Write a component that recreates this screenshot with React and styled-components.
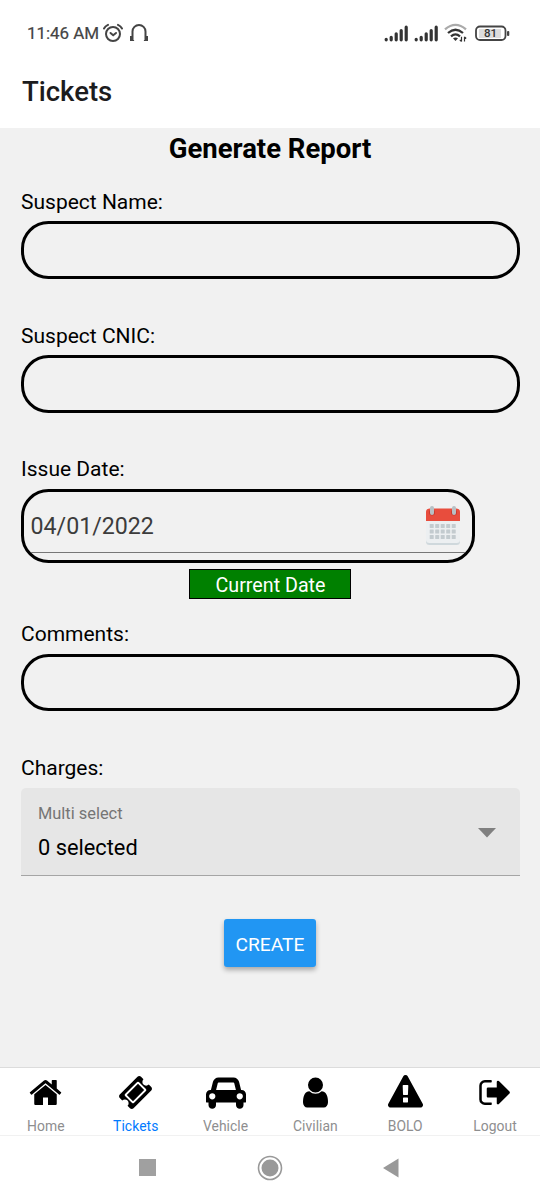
import React from "react";
import styled, { createGlobalStyle } from "styled-components";

const Global = createGlobalStyle`
  * { box-sizing: border-box; }
  body { margin: 0; background: #fff; font-family: Roboto, "Liberation Sans", sans-serif; }
  button, input { font-family: inherit; }
`;

const Screen = styled.div`
  width: 540px;
  height: 1200px;
  display: flex;
  flex-direction: column;
  background: #fff;
  overflow: hidden;
`;

const StatusBar = styled.div`
  height: 66px;
  padding: 0 30px 0 27px;
  display: flex;
  align-items: center;
  justify-content: space-between;
`;

const StatusGroup = styled.div`
  display: flex;
  align-items: center;
  gap: ${(p) => p.$gap}px;
`;

const Clock = styled.span`
  font-size: 17px;
  line-height: 20px;
  letter-spacing: -0.05px;
  color: #444;
  white-space: nowrap;
  -webkit-text-stroke: 0.2px #444;
`;

const Header = styled.header`
  height: 62px;
  padding: 9px 22px 0;
  font-size: 27.5px;
  line-height: 34px;
  font-weight: 500;
  color: #1c1c1e;
`;

const Form = styled.main`
  height: 939px;
  padding: 4px 21px 0;
  display: flex;
  flex-direction: column;
  background: #f1f1f1;
`;

const Heading = styled.h1`
  margin: 0 0 20px;
  font-size: 27.5px;
  line-height: 34px;
  font-weight: 700;
  text-align: center;
  color: #000;
`;

const Field = styled.div`
  height: ${(p) => p.$height}px;
  display: flex;
  flex-direction: column;
`;

const Label = styled.label`
  height: ${(p) => p.$height || 36}px;
  font-size: 21px;
  line-height: 32px;
  color: #000;
`;

const Input = styled.input`
  width: 499px;
  height: ${(p) => p.$height}px;
  padding: 0 12px;
  border: 3px solid #000;
  border-radius: 27.5px;
  background: transparent;
  font-size: 20px;
  outline: none;
`;

const DateBox = styled.div`
  width: 454px;
  height: 74px;
  flex: none;
  border: 3px solid #000;
  border-radius: 27.5px;
  overflow: hidden;
`;

const DateRow = styled.div`
  height: 61px;
  padding: 8px 12px 0 6.5px;
  display: flex;
  align-items: center;
  justify-content: space-between;
  border-bottom: 1px solid #777;
  font-size: 23.2px;
  color: #3c3c3c;
`;

const CurrentDate = styled.button`
  align-self: center;
  width: 162px;
  height: 30px;
  margin-top: 6px;
  padding: 3px 0 0 1px;
  border: 1px solid #000;
  background: #008000;
  color: #fff;
  font-size: 19.7px;
  line-height: 26px;
`;

const Select = styled.div`
  width: 499px;
  height: 88px;
  flex: none;
  padding: 2px 24px 0 17px;
  display: flex;
  align-items: center;
  justify-content: space-between;
  border-radius: 5px 5px 0 0;
  border-bottom: 1px solid #a5a5a5;
  background: #e6e6e6;
`;

const SelectText = styled.div`
  display: flex;
  flex-direction: column;
  gap: 8px;
`;

const SelectCaption = styled.span`
  font-size: 16.4px;
  line-height: 22px;
  color: #757575;
`;

const SelectValue = styled.span`
  font-size: 21.8px;
  line-height: 30px;
  color: #000;
`;

const CreateButton = styled.button`
  align-self: center;
  width: 92px;
  height: 48px;
  margin-top: 43px;
  padding: 2px 0 0;
  border: 0;
  border-radius: 3px;
  background: #2196f3;
  color: #fff;
  font-size: 19.2px;
  box-shadow: 0 3px 5px rgba(0, 0, 0, 0.3);
`;

const TabBar = styled.nav`
  height: 69px;
  padding-left: 1px;
  display: flex;
  border-top: 1px solid #dcdcdc;
  border-bottom: 1px solid #f1f1f1;
`;

const Tab = styled.a`
  flex: 1;
  padding-top: 7px;
  display: flex;
  flex-direction: column;
  align-items: center;
  gap: 6px;
  font-size: 13.9px;
  line-height: 20px;
  letter-spacing: 0.05px;
  color: ${(p) => (p.$active ? "#007aff" : "#8e8e8f")};
`;

const TabIcon = styled.svg`
  flex: none;
  height: 35px;
  width: ${(p) => p.$width}px;
  fill: #000;
`;

const SystemNav = styled.div`
  height: 64px;
  padding: 0 0 1px 139px;
  display: flex;
  align-items: center;
  gap: 100px;
`;

const tabs = [
  { name: "Home", d: "M1472 992v480q0 26-19 45t-45 19h-384v-384h-256v384h-384q-26 0-45-19t-19-45v-480q0-1 .5-3t.5-3l575-474 575 474q1 2 1 6zm223-69l-62 74q-8 9-21 11h-3q-13 0-21-7l-692-577-692 577q-12 8-24 7-13-2-21-11l-62-74q-8-10-7-23.5t11-21.5l719-599q32-26 76-26t76 26l244 204v-195q0-14 9-23t23-9h192q14 0 23 9t9 23v408l219 182q10 8 11 21.5t-7 23.5z" },
  { name: "Tickets", active: true, d: "M1024 452l316 316-572 572-316-316zm-211 979l618-618q19-19 19-45t-19-45l-362-362q-18-18-45-18t-45 18l-618 618q-19 19-19 45t19 45l362 362q18 18 45 18t45-18zm889-637l-907 908q-37 37-90.5 37t-90.5-37l-126-126q56-56 56-136t-56-136-136-56-136 56l-125-126q-37-37-37-90.5t37-90.5l907-906q37-37 90.5-37t90.5 37l125 125q-56 56-56 136t56 136 136 56 136-56l126 125q37 37 37 90.5t-37 90.5z" },
  { name: "Vehicle", units: 2048, d: "M480 1088q0-66-47-113t-113-47-113 47-47 113 47 113 113 47 113-47 47-113zm36-320h1016l-89-357q-2-8-14-17.500t-21-9.500h-768q-9 0-21 9.500t-14 17.500zm1372 320q0-66-47-113t-113-47-113 47-47 113 47 113 113 47 113-47 47-113zm160-96v384q0 14-9 23t-23 9h-96v128q0 80-56 136t-136 56-136-56-56-136v-128h-1024v128q0 80-56 136t-136 56-136-56-56-136v-128h-96q-14 0-23-9t-9-23v-384q0-93 65.500-158.500t158.500-65.500h28l105-419q23-94 104-157.500t179-63.500h768q98 0 179 63.500t104 157.500l105 419h28q93 0 158.500 65.500t65.500 158.500z" },
  { name: "Civilian", d: "M1536 1399q0 109-62.5 187t-150.5 78h-854q-88 0-150.5-78t-62.5-187q0-85 8.5-160.5t31.500-152 58.500-131 94-89 134.500-34.500q131 128 313 128t313-128q76 0 134.500 34.500t94 89 58.500 131 31.500 152 8.500 160.500zm-256-887q0 159-112.500 271.500t-271.500 112.500-271.500-112.500-112.500-271.500 112.500-271.500 271.500-112.500 271.500 112.500 112.500 271.500z" },
  { name: "BOLO", d: "M1024 1375v-190q0-14-9.500-23.500t-22.500-9.500h-192q-13 0-22.500 9.500t-9.500 23.500v190q0 14 9.500 23.500t22.500 9.500h192q13 0 22.500-9.500t9.500-23.500zm-2-374l18-459q0-12-10-19-13-11-24-11h-220q-11 0-24 11-10 7-10 21l17 457q0 10 10 16.500t24 6.500h185q14 0 23.500-6.500t10.500-16.500zm-14-934l768 1408q35 63-2 126-17 29-46.500 46t-63.500 17h-1536q-34 0-63.500-17t-46.500-46q-37-63-2-126l768-1408q17-31 47-49t65-18 65 18 47 49z" },
  { name: "Logout", d: "M704 1440q0 4 1 20t.5 26.500-3 23.500-10 19.500-20.500 6.500h-320q-119 0-203.500-84.500t-84.500-203.500v-704q0-119 84.500-203.500t203.500-84.500h320q13 0 22.500 9.500t9.500 22.500q0 4 1 20t.5 26.500-3 23.500-10 19.500-20.500 6.500h-320q-66 0-113 47t-47 113v704q0 66 47 113t113 47h312l11.500 1 11.500 3 8 5.500 7 9 2 13.500zm928-544q0 26-19 45l-544 544q-19 19-45 19t-45-19-19-45v-288h-448q-26 0-45-19t-19-45v-384q0-26 19-45t45-19h448v-288q0-26 19-45t45-19 45 19l544 544q19 19 19 45z" },
];

const AlarmIcon = () => (
  <svg width="20" height="20" viewBox="0 0 20 20" fill="none" stroke="#444" strokeWidth="2" strokeLinecap="round">
    <circle cx="10" cy="11" r="7" />
    <path d="M1 5.500Q2.300 3 5 1.800M19 5.500Q17.700 3 15 1.800" />
    <path d="M7.500 10l2.700 2.300L13 10" />
  </svg>
);

const HeadphonesIcon = () => (
  <svg width="20" height="20" viewBox="0 0 20 20" fill="none" stroke="#444">
    <path d="M3.500 17V8.500a6.500 6.500 0 0 1 13 0V17" strokeWidth="2" />
    <path d="M2.500 13v5M17.500 13v5" strokeWidth="3" />
    <path d="M4.500 17v1M15.500 17v1" strokeWidth="1.200" />
  </svg>
);

const SignalIcon = () => (
  <svg width="25" height="17" viewBox="0 0 25 17" stroke="#333" strokeWidth="3.200" strokeLinecap="round">
    <path d="M2.200 14.300v.5M7.200 12.300v2.500M12.200 8.800v6M17.200 5.600v9.200M22.200 2.200v12.600" />
  </svg>
);

const WifiIcon = () => (
  <svg width="24" height="20" viewBox="0 0 24 20" fill="none" strokeWidth="2.300">
    <path d="M1 6.300Q11.500-2.500 22 6.300" stroke="#aaa" />
    <path d="M4 10Q11.500 3.500 19 10M7 13.300Q11.500 9.500 16 13.300" stroke="#333" />
    <path d="M9 15.200Q11.500 13.600 14 15.200L11.500 18z" fill="#333" />
    <path d="M17.500 13.800v4.700m-1.700-1.700l1.700 1.700M20.500 18.500v-4.700m1.700 1.700l-1.700-1.700" stroke="#333" strokeWidth="1.200" />
  </svg>
);

const BatteryIcon = () => (
  <svg width="35" height="17" viewBox="0 0 35 17">
    <rect x="4" y="4" width="22" height="9" fill="#ddd" />
    <rect x="1" y="1.500" width="29.500" height="13.500" rx="4" fill="none" stroke="#444" strokeWidth="1.800" />
    <rect x="32" y="6" width="2.300" height="5" rx="1" fill="#444" />
    <text x="15.600" y="12.300" textAnchor="middle" fontSize="11.5" fontWeight="500" fontFamily="Roboto, sans-serif" fill="#333">81</text>
  </svg>
);

const CalendarIcon = () => (
  <svg width="34" height="40" viewBox="0 0 34 40">
    <rect x="0" y="5" width="34" height="34" rx="3.500" fill="#cfd8dc" />
    <path d="M0 10h34v24q0 3-3.500 3h-27Q0 37 0 34z" fill="#eceff1" />
    <path d="M0 15V6Q0 2.500 3.500 2.500h27Q34 2.500 34 6V15z" fill="#e84d3d" />
    <circle cx="6" cy="6.500" r="3" fill="#c43b30" />
    <circle cx="28" cy="6.500" r="3" fill="#c43b30" />
    <rect x="4" y="0" width="4" height="9" rx="2" fill="#b8c0c4" />
    <rect x="26" y="0" width="4" height="9" rx="2" fill="#b8c0c4" />
    {[18, 23.5, 29].map((y) =>
      [3.7, 9.2, 14.7, 20.2, 25.7].map((x) => (
        <rect key={`${x}-${y}`} x={x} y={y} width="4" height="4" rx="0.600" fill="#c3cbcf" />
      ))
    )}
  </svg>
);

export default function App() {
  return (
    <>
      <Global />
      <Screen>
        <StatusBar>
          <StatusGroup $gap={6}>
            <StatusGroup $gap={4}>
              <Clock>11:46 AM</Clock>
              <AlarmIcon />
            </StatusGroup>
            <HeadphonesIcon />
          </StatusGroup>
          <StatusGroup $gap={7}>
            <StatusGroup $gap={5}>
              <SignalIcon />
              <SignalIcon />
              <WifiIcon />
            </StatusGroup>
            <BatteryIcon />
          </StatusGroup>
        </StatusBar>
        <Header>Tickets</Header>
        <Form>
          <Heading>Generate Report</Heading>
          <Field $height={134}>
            <Label $height={35} htmlFor="name">Suspect Name:</Label>
            <Input $height={58} id="name" />
          </Field>
          <Field $height={133}>
            <Label $height={35} htmlFor="cnic">Suspect CNIC:</Label>
            <Input $height={58} id="cnic" />
          </Field>
          <Field $height={165}>
            <Label>Issue Date:</Label>
            <DateBox>
              <DateRow>
                <span>04/01/2022</span>
                <CalendarIcon />
              </DateRow>
            </DateBox>
            <CurrentDate type="button">Current Date</CurrentDate>
          </Field>
          <Field $height={134}>
            <Label htmlFor="comments">Comments:</Label>
            <Input $height={57} id="comments" />
          </Field>
          <Field $height={124}>
            <Label>Charges:</Label>
            <Select>
              <SelectText>
                <SelectCaption>Multi select</SelectCaption>
                <SelectValue>0 selected</SelectValue>
              </SelectText>
              <svg width="18" height="10" viewBox="0 0 18 10"><path d="M0 0h18L9 9.500z" fill="#808080" /></svg>
            </Select>
          </Field>
          <CreateButton type="button">CREATE</CreateButton>
        </Form>
        <TabBar>
          {tabs.map(({ name, d, active, units = 1792 }) => (
            <Tab key={name} $active={active}>
              <TabIcon $width={(35 * units) / 1792} viewBox={`0 0 ${units} 1792`}>
                <path d={d} />
              </TabIcon>
              <span>{name}</span>
            </Tab>
          ))}
        </TabBar>
        <SystemNav>
          <svg width="17" height="17"><rect width="17" height="17" fill="#a0a0a0" /></svg>
          <svg width="27" height="26" viewBox="0 0 27 26">
            <circle cx="14" cy="13" r="11.500" fill="none" stroke="#999" strokeWidth="1.600" />
            <circle cx="14" cy="13" r="8.500" fill="#999" />
          </svg>
          <svg width="17" height="20" viewBox="0 0 17 20"><path d="M15.500.5v19L0 10z" fill="#999" /></svg>
        </SystemNav>
      </Screen>
    </>
  );
}
